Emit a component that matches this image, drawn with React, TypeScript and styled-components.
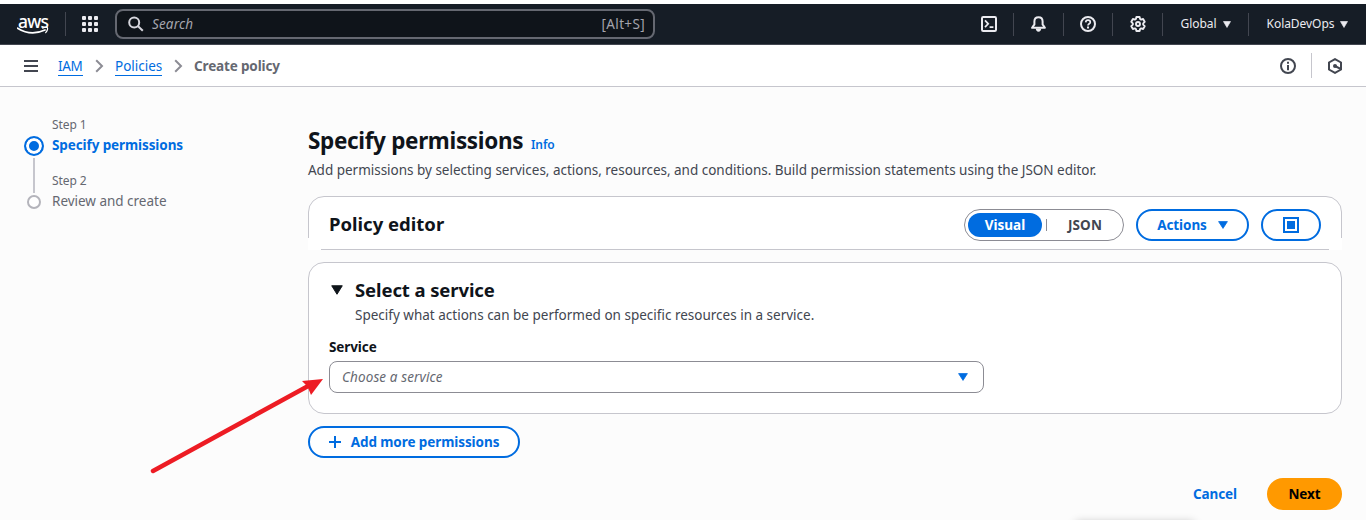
import React from "react";
import styled, { createGlobalStyle } from "styled-components";

const blue = "#006ce0";

const GlobalStyle = createGlobalStyle`
  *, *::before, *::after { box-sizing: border-box; }
  html, body { margin: 0; height: 520px; overflow: hidden; background: #fcfcfc; }
  body { font-family: "Noto Sans", "Open Sans", sans-serif; font-size: 14px; color: #0f141a; }
  h1, h2, h3, p, ol { margin: 0; padding: 0; }
  button { font-family: inherit; padding: 0; margin: 0; background: none; border: 0; }
  svg { display: block; flex: none; }
`;

const Page = styled.div`
  position: relative;
  width: 1366px;
  height: 520px;
  overflow: hidden;
  display: flex;
  flex-direction: column;
`;

const Text = styled.span<{ $size?: number; $track?: number; $weight?: number; $color?: string; $italic?: boolean }>`
  display: block;
  white-space: nowrap;
  font-size: ${(p) => p.$size ?? 13.5}px;
  padding-top: ${(p) => (p.$size ? 0 : 1)}px;
  line-height: ${(p) => (p.$size ? 20 : 19)}px;
  font-weight: ${(p) => p.$weight ?? 400};
  font-style: ${(p) => (p.$italic ? "italic" : "normal")};
  letter-spacing: ${(p) => p.$track ?? (p.$weight ? -0.1 : -0.015)}px;
  color: ${(p) => p.$color ?? "inherit"};
`;

const Lead = styled(Text)`
  margin-top: 4px;
`;

const TopBar = styled.header`
  height: 45px;
  flex: none;
  display: flex;
  align-items: center;
  background: #161d26;
  border-top: 4px solid #fff;
  border-bottom: 1px solid #424650;
  box-shadow: inset 0 0 0 0 #161d26;
`;

const Logo = styled.div`
  width: 66px;
  height: 24px;
  padding-left: 17px;
  border-right: 1px solid #424650;
  display: flex;
  flex-direction: column;
  justify-content: center;
`;

const LogoWord = styled.span`
  font-size: 17.5px;
  line-height: 14px;
  height: 13px;
  padding-left: 1px;
  font-weight: 500;
  letter-spacing: -0.8px;
  color: #fff;
`;

const AppGrid = styled.div`
  width: 17px;
  height: 17px;
  margin: 0 17px 0 15px;
  display: grid;
  grid-template-columns: repeat(3, 4px);
  gap: 2px;
  place-content: center;
`;

const GridDot = styled.i`
  width: 4px;
  height: 4px;
  border-radius: 1px;
  background: #ebebf0;
`;

const SearchBox = styled.div`
  width: 540px;
  height: 30px;
  border: 2px solid #656871;
  border-radius: 8px;
  background: #0f141a;
  display: flex;
  align-items: center;
  padding: 0 8px 0 11px;
  gap: 8px;
  color: #a4a4ad;
`;

const Spacer = styled.div`
  flex: 1;
`;

const NavCell = styled.div<{ $w: number; $last?: boolean }>`
  width: ${(p) => p.$w}px;
  height: 23px;
  display: flex;
  align-items: center;
  justify-content: center;
  gap: 6px;
  color: #ebebf0;
  border-right: ${(p) => (p.$last ? "0" : "1px solid #424650")};
`;

const SubBar = styled.nav`
  height: 42px;
  flex: none;
  background: #fff;
  border-bottom: 1px solid #c6c6cd;
  display: flex;
  align-items: center;
  padding: 0 8px 0 24px;
  color: #424650;
`;

const MenuToggle = styled.div`
  width: 34px;
`;

const Crumb = styled.a<{ $w: number }>`
  width: ${(p) => p.$w}px;
  color: ${blue};
  border-bottom: 1px solid ${blue};
  height: 20px;
`;

const Chevron = styled.div<{ $l: number; $r: number }>`
  margin: 0 ${(p) => p.$r}px 0 ${(p) => p.$l}px;
`;

const SubIcon = styled.div<{ $w: number; $line?: boolean }>`
  width: ${(p) => p.$w}px;
  height: 25px;
  display: flex;
  align-items: center;
  justify-content: center;
  border-right: ${(p) => (p.$line ? "1px solid #c6c6cd" : "0")};
`;

const Body = styled.main`
  flex: 1;
  display: flex;
  padding: 28px 24px 0 24px;
`;

const Steps = styled.ol`
  width: 284px;
  list-style: none;
`;

const Step = styled.li`
  display: flex;
  height: 56px;
`;

const Rail = styled.div`
  width: 20px;
  margin-right: 8px;
  padding-top: 21px;
  display: flex;
  flex-direction: column;
  align-items: center;
`;

const StepDot = styled.span<{ $active?: boolean }>`
  width: ${(p) => (p.$active ? 20 : 14)}px;
  height: ${(p) => (p.$active ? 20 : 14)}px;
  flex: none;
  margin-top: ${(p) => (p.$active ? 0 : 3)}px;
  border-radius: 50%;
  border: 2px solid ${(p) => (p.$active ? blue : "#b4b4bb")};
  background: ${(p) => (p.$active ? blue : "#fff")};
  box-shadow: ${(p) => (p.$active ? "inset 0 0 0 3px #fff" : "none")};
`;

const StepLine = styled.span`
  width: 2px;
  height: 35px;
  flex: none;
  margin-top: 2px;
  background: #c6c6cd;
`;

const Content = styled.section`
  width: 1034px;
  display: flex;
  flex-direction: column;
`;

const TitleRow = styled.div`
  height: 30px;
  margin-top: 11px;
  display: flex;
  align-items: center;
`;

const TitleBox = styled.div`
  width: 223px;
`;

const InfoLink = styled.a`
  padding-top: 8px;
  color: ${blue};
`;

const EditorCard = styled.div`
  width: 1034px;
  height: 54px;
  margin-top: 16px;
  position: relative;
  flex: none;
  display: flex;
  align-items: center;
  gap: 12px;
  padding: 3px 20px 0 20px;
  background: #fff;
  border: 1px solid #c6c6cd;
  border-radius: 16px 16px 0 0;
  &::before, &::after {
    content: "";
    position: absolute;
    bottom: -1px;
    width: 13px;
    height: 12px;
    background: #fff;
  }
  &::before { left: -1px; }
  &::after { right: -1px; }
`;

const EditorTitle = styled.div`
  padding-bottom: 2px;
`;

const Segments = styled.div`
  width: 160px;
  height: 32px;
  border: 1px solid #8c8c94;
  border-radius: 16px;
  display: flex;
  align-items: center;
  padding: 0 0 0 3px;
`;

const Segment = styled.button<{ $active?: boolean }>`
  width: ${(p) => (p.$active ? 74 : 76)}px;
  height: 24px;
  flex: none;
  border-radius: 12px;
  display: flex;
  align-items: center;
  justify-content: center;
  color: ${(p) => (p.$active ? "#fff" : "#424650")};
  background: ${(p) => (p.$active ? blue : "transparent")};
`;

const SegmentRule = styled.i`
  width: 1px;
  height: 12px;
  margin-left: 4px;
  background: #8c8c94;
`;

const PillButton = styled.button<{ $w: number; $gap?: number }>`
  width: ${(p) => p.$w}px;
  height: 32px;
  flex: none;
  border: 2px solid ${blue};
  border-radius: 16px;
  background: #fff;
  color: ${blue};
  display: flex;
  align-items: center;
  justify-content: center;
  gap: ${(p) => p.$gap ?? 0}px;
`;

const ServiceCard = styled.div`
  width: 1034px;
  height: 152px;
  margin: 12px 0;
  flex: none;
  background: #fff;
  border: 1px solid #c6c6cd;
  border-radius: 16px;
  padding: 15px 20px 0;
`;

const CardHeading = styled.div`
  height: 24px;
  display: flex;
  align-items: center;
  gap: 12px;
  padding-left: 2px;
`;

const Indent = styled.div`
  padding-left: 26px;
  margin: 3px 0 12px;
`;

const SelectBox = styled.div`
  width: 655px;
  height: 32px;
  margin-top: 4px;
  border: 1px solid #8c8c94;
  border-radius: 8px;
  display: flex;
  align-items: center;
  justify-content: space-between;
  padding: 0 15px 0 12px;
`;

const Actions = styled.div`
  display: flex;
  justify-content: flex-end;
  align-items: center;
  gap: 30px;
  margin-top: 20px;
`;

const NextButton = styled.button`
  width: 75px;
  height: 32px;
  border-radius: 16px;
  background: #ff9900;
  display: flex;
  align-items: center;
  justify-content: center;
`;

const Arrow = styled.svg`
  position: absolute;
  left: 148px;
  top: 374px;
`;

const BottomShade = styled.div`
  position: absolute;
  left: 1076px;
  top: 522px;
  width: 118px;
  height: 10px;
  box-shadow: 0 0 8px rgba(0, 0, 0, 0.25);
`;

const Caret = ({ w = 10, h = 8, color = "currentColor" }: { w?: number; h?: number; color?: string }) => (
  <svg width={w} height={h} viewBox="0 0 10 8" preserveAspectRatio="none">
    <path d="M.6.6h8.8L5 7.4z" fill={color} stroke={color} strokeWidth=".8" strokeLinejoin="round" />
  </svg>
);

const Icon = ({ children, size = 16 }: { children: React.ReactNode; size?: number }) => (
  <svg width={size} height={size} viewBox="0 0 16 16" fill="none" stroke="currentColor" strokeWidth="2">
    {children}
  </svg>
);

const ChevronIcon = () => (
  <svg width="9" height="14" viewBox="0 0 9 14" fill="none" stroke="#8c8c94" strokeWidth="2">
    <path d="M1.2 1.2 7 7l-5.8 5.8" />
  </svg>
);

export default function App() {
  return (
    <Page>
      <GlobalStyle />
      <TopBar>
        <Logo>
          <LogoWord>aws</LogoWord>
          <svg width="32" height="8" viewBox="0 0 32 8">
            <path d="M.6 1.2C9.5 6.8 19.5 6.9 28 3" fill="none" stroke="#fff" strokeWidth="1.7" strokeLinecap="round" />
            <path d="M25.6 1.1c2-.9 4.3-.8 4.8-.4.5.5 0 3.2-1.7 5" fill="none" stroke="#fff" strokeWidth="1.2" strokeLinecap="round" />
          </svg>
        </Logo>
        <AppGrid>
          {Array.from({ length: 9 }, (_, i) => (
            <GridDot key={i} />
          ))}
        </AppGrid>
        <SearchBox>
          <svg width="16" height="16" viewBox="0 0 16 16" fill="none" stroke="#d6d6dd" strokeWidth="2">
            <circle cx="6.2" cy="6.4" r="5" />
            <path d="m9.8 10 5 4.8" />
          </svg>
          <Text $italic $track={0.15}>Search</Text>
          <Spacer />
          <Text $track={0.35}>[Alt+S]</Text>
        </SearchBox>
        <Spacer />
        <NavCell $w={49}>
          <Icon>
            <rect x="1" y="1" width="14" height="14" rx="1.2" />
            <path d="m4 4.4 3.2 3.4L4 11.2M8.6 11.2H12.4" strokeWidth="1.7" />
          </Icon>
        </NavCell>
        <NavCell $w={50}>
          <Icon>
            <path d="M7.5 1.3C4.8 1.3 3.4 3.3 3.4 5.6v2.8L1.1 11.8h12.8l-2.3-3.4V5.6C11.6 3.3 10.2 1.3 7.5 1.3z" strokeLinejoin="round" />
            <path d="M4.8 12.5h5.4c0 2-1.1 3.2-2.7 3.2s-2.7-1.2-2.7-3.2z" fill="currentColor" stroke="none" />
          </Icon>
        </NavCell>
        <NavCell $w={49}>
          <Icon>
            <circle cx="8" cy="8" r="7" />
            <path d="M5.7 6.4C5.8 5 6.7 4.2 8 4.2s2.3.8 2.3 2c0 1.6-2.3 1.6-2.3 3.3" strokeWidth="1.7" />
            <path d="M8 10.6v2" />
          </Icon>
        </NavCell>
        <NavCell $w={50}>
          <Icon>
            <path d="M6.4 1h3.2l.5 2 1 .6 2-.6 1.6 2.8L13.2 7.3v1.4l1.5 1.5-1.6 2.8-2-.6-1 .6-.5 2H6.4l-.5-2-1-.6-2 .6-1.6-2.8 1.5-1.5V7.3L1.3 5.8 2.9 3l2 .6 1-.6z" strokeWidth="1.9" strokeLinejoin="round" />
            <circle cx="8" cy="8" r="2" strokeWidth="1.9" />
          </Icon>
        </NavCell>
        <NavCell $w={86}>
          <Text $size={12} $track={-0.05}>Global</Text>
          <Caret w={8} h={7} />
        </NavCell>
        <NavCell $w={117} $last>
          <Text $size={12} $track={-0.05}>KolaDevOps</Text>
          <Caret w={8} h={7} />
        </NavCell>
      </TopBar>

      <SubBar>
        <MenuToggle>
          <svg width="14" height="12" viewBox="0 0 14 12" fill="#424650">
            <path d="M0 0h14v2H0zM0 5h14v2H0zM0 10h14v2H0z" />
          </svg>
        </MenuToggle>
        <Crumb $w={25}><Text $track={-0.3}>IAM</Text></Crumb>
        <Chevron $l={12} $r={11}><ChevronIcon /></Chevron>
        <Crumb $w={47}><Text>Policies</Text></Crumb>
        <Chevron $l={12} $r={11}><ChevronIcon /></Chevron>
        <Text $weight={700} $track={-0.15} $color="#656871">Create policy</Text>
        <Spacer />
        <SubIcon $w={48} $line>
          <Icon>
            <circle cx="8" cy="8" r="7" />
            <path d="M8 3.7v2M8 7v5.3" />
          </Icon>
        </SubIcon>
        <SubIcon $w={46}>
          <Icon>
            <path d="M8 1.1 14 4.5v7L8 14.9 2 11.5v-7z" />
            <circle cx="8" cy="8" r="2" fill="currentColor" stroke="none" />
            <path d="m8 8 6 3.2" />
          </Icon>
        </SubIcon>
      </SubBar>

      <Body>
        <Steps>
          <Step>
            <Rail>
              <StepDot $active />
              <StepLine />
            </Rail>
            <div>
              <Text $size={12} $track={-0.1} $color="#656871">Step 1</Text>
              <Text $weight={700} $color={blue}>Specify permissions</Text>
            </div>
          </Step>
          <Step>
            <Rail>
              <StepDot />
            </Rail>
            <div>
              <Text $size={12} $track={-0.1} $color="#656871">Step 2</Text>
              <Text $color="#656871">Review and create</Text>
            </div>
          </Step>
        </Steps>

        <Content>
          <TitleRow>
            <TitleBox>
              <Text as="h1" $size={22.5} $weight={700} $track={-0.33}>Specify permissions</Text>
            </TitleBox>
            <InfoLink><Text $size={12} $weight={600} $track={-0.1}>Info</Text></InfoLink>
          </TitleRow>
          <Lead as="p" $color="#424650">
            Add permissions by selecting services, actions, resources, and conditions. Build permission statements using the JSON editor.
          </Lead>

          <EditorCard>
            <EditorTitle>
              <Text as="h2" $size={18.5} $weight={700} $track={0}>Policy editor</Text>
            </EditorTitle>
            <Spacer />
            <Segments>
              <Segment $active><Text $weight={700} $track={0}>Visual</Text></Segment>
              <SegmentRule />
              <Segment><Text $weight={700} $track={0.1}>JSON</Text></Segment>
            </Segments>
            <PillButton $w={113} $gap={11}>
              <Text $weight={700}>Actions</Text>
              <Caret w={10} h={8} />
            </PillButton>
            <PillButton $w={60}>
              <Icon>
                <rect x="1" y="1" width="14" height="14" />
                <rect x="4" y="4" width="8" height="8" fill="currentColor" stroke="none" />
              </Icon>
            </PillButton>
          </EditorCard>

          <ServiceCard>
            <CardHeading>
              <Caret w={12} h={10} color="#0f141a" />
              <Text as="h2" $size={18.5} $weight={700}>Select a service</Text>
            </CardHeading>
            <Indent>
              <Text as="p" $color="#424650" $track={0}>Specify what actions can be performed on specific resources in a service.</Text>
            </Indent>
            <Text $weight={700}>Service</Text>
            <SelectBox>
              <Text $italic $track={0.12} $color="#656871">Choose a service</Text>
              <Caret w={10} h={8} color={blue} />
            </SelectBox>
          </ServiceCard>

          <PillButton $w={212} $gap={10}>
            <svg width="12" height="12" viewBox="0 0 12 12" fill={blue}>
              <path d="M5 0h2v5h5v2H7v5H5V7H0V5h5z" />
            </svg>
            <Text $weight={700} $track={-0.08}>Add more permissions</Text>
          </PillButton>

          <Actions>
            <Text $weight={700} $color={blue}>Cancel</Text>
            <NextButton><Text $weight={700}>Next</Text></NextButton>
          </Actions>
        </Content>
      </Body>

      <Arrow width="180" height="102" viewBox="0 0 180 102">
        <path d="M5 97 162 11" stroke="#ed1c24" strokeWidth="4.5" strokeLinecap="round" />
        <path d="M175 5 154 7l5.5 5.5L163 21z" fill="#ed1c24" />
      </Arrow>
      <BottomShade />
    </Page>
  );
}
